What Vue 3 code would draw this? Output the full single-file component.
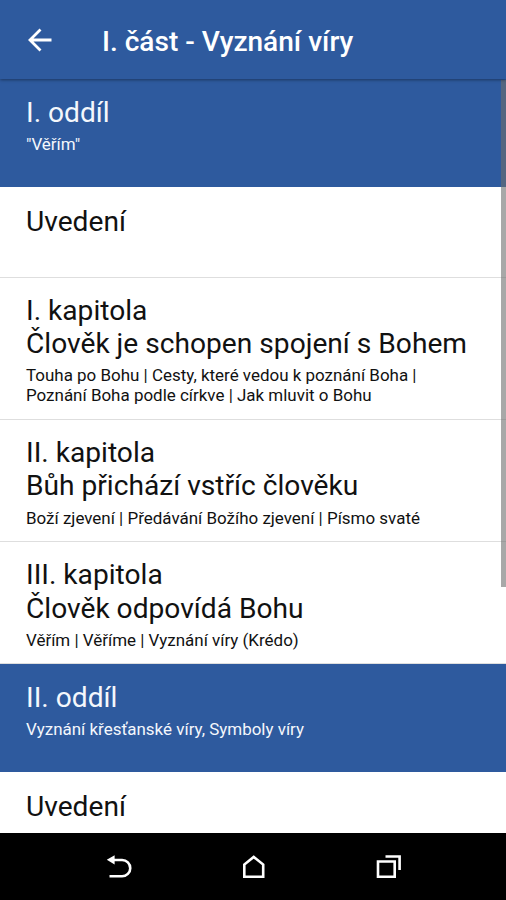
<template>
  <div class="screen">
    <header class="toolbar">
      <svg class="back" viewBox="0 0 26 26" @click="goBack">
        <path d="M24.5 13H3M13.5 2.5L3 13L13.5 23.5" />
      </svg>
      <h1 class="toolbar-title">I. část - Vyznání víry</h1>
    </header>

    <main class="list">
      <div
        v-for="(item, index) in items"
        :key="index"
        class="item"
        :class="{ section: item.section, single: !item.text }"
      >
        <div v-for="line in item.title" :key="line" class="title">{{ line }}</div>
        <div v-if="item.text" class="text">
          <div v-for="line in item.text" :key="line">{{ line }}</div>
        </div>
      </div>
      <div class="scrollbar"></div>
    </main>

    <nav class="navbar">
      <svg class="nav-icon" viewBox="0 0 30 30">
        <path d="M9 5H19.1A8.15 8.15 0 0 1 19.1 21.3H6.5" />
        <path class="solid" d="M3.8 4.8L11.6 0.2V9.4Z" />
      </svg>
      <svg class="nav-icon" viewBox="0 0 30 30">
        <path d="M6.3 21.8V9.6L15.7 1.9L25.2 9.6V21.8Z" />
      </svg>
      <svg class="nav-icon" viewBox="0 0 30 30">
        <path d="M5 6.5H21.7V21.8H5Z" />
        <path d="M12.5 1.5H26.6V15" />
      </svg>
    </nav>
  </div>
</template>

<script setup>
import { ref } from 'vue'

const items = ref([
  { section: true, title: ['I. oddíl'], text: ['"Věřím"'] },
  { title: ['Uvedení'] },
  {
    title: ['I. kapitola', 'Člověk je schopen spojení s Bohem'],
    text: [
      'Touha po Bohu | Cesty, které vedou k poznání Boha |',
      'Poznání Boha podle církve | Jak mluvit o Bohu'
    ]
  },
  {
    title: ['II. kapitola', 'Bůh přichází vstříc člověku'],
    text: ['Boží zjevení | Předávání Božího zjevení | Písmo svaté']
  },
  {
    title: ['III. kapitola', 'Člověk odpovídá Bohu'],
    text: ['Věřím | Věříme | Vyznání víry (Krédo)']
  },
  { section: true, title: ['II. oddíl'], text: ['Vyznání křesťanské víry, Symboly víry'] },
  { title: ['Uvedení'] }
])

const goBack = () => {
  window.history.back()
}
</script>

<style>
body {
  margin: 0;
}
</style>

<style scoped>
.screen {
  display: flex;
  flex-direction: column;
  height: 900px;
  overflow: hidden;
  background: #fff;
  font-family: Roboto, "Noto Sans", sans-serif;
}

.toolbar {
  display: flex;
  align-items: center;
  flex: none;
  box-sizing: border-box;
  height: 79px;
  padding: 4px 27px 0;
  background: #2e5a9e;
  box-shadow: 0 1px 3px rgba(0, 0, 0, 0.4);
  position: relative;
  z-index: 1;
}

.back {
  width: 26px;
  height: 26px;
  margin-top: -3px;
  fill: none;
  stroke: #fff;
  stroke-width: 2.8;
}

.toolbar-title {
  margin: 0 0 0 49px;
  color: #fff;
  font-size: 28.05px;
  font-weight: 500;
  line-height: 33px;
  white-space: nowrap;
}

.list {
  position: relative;
  flex: 1;
  min-height: 0;
  overflow: hidden;
}

.item {
  box-sizing: border-box;
  min-height: 90.5px;
  padding: 16.6px 26px 12.5px;
  border-bottom: 1px solid #dedede;
  color: #111;
  white-space: nowrap;
}

.item.single {
  padding-top: 18px;
}

.item.section {
  min-height: 108px;
  border-bottom-color: #2e5a9e;
  background: #2e5a9e;
  color: #f4f7fc;
}

.title {
  font-size: 28.15px;
  line-height: 33.3px;
}

.text {
  margin-top: 5.8px;
  font-size: 16.97px;
  line-height: 19.8px;
}

.scrollbar {
  position: absolute;
  top: 1px;
  right: 0;
  width: 5px;
  height: 507px;
  background: rgba(110, 110, 110, 0.6);
}

.navbar {
  display: flex;
  align-items: center;
  justify-content: space-between;
  flex: none;
  box-sizing: border-box;
  height: 67px;
  padding: 7px 103px 0;
  background: #000;
}

.nav-icon {
  width: 30px;
  height: 30px;
  overflow: visible;
  fill: none;
  stroke: #fff;
  stroke-width: 2.6;
}

.nav-icon .solid {
  fill: #fff;
  stroke: none;
}
</style>
